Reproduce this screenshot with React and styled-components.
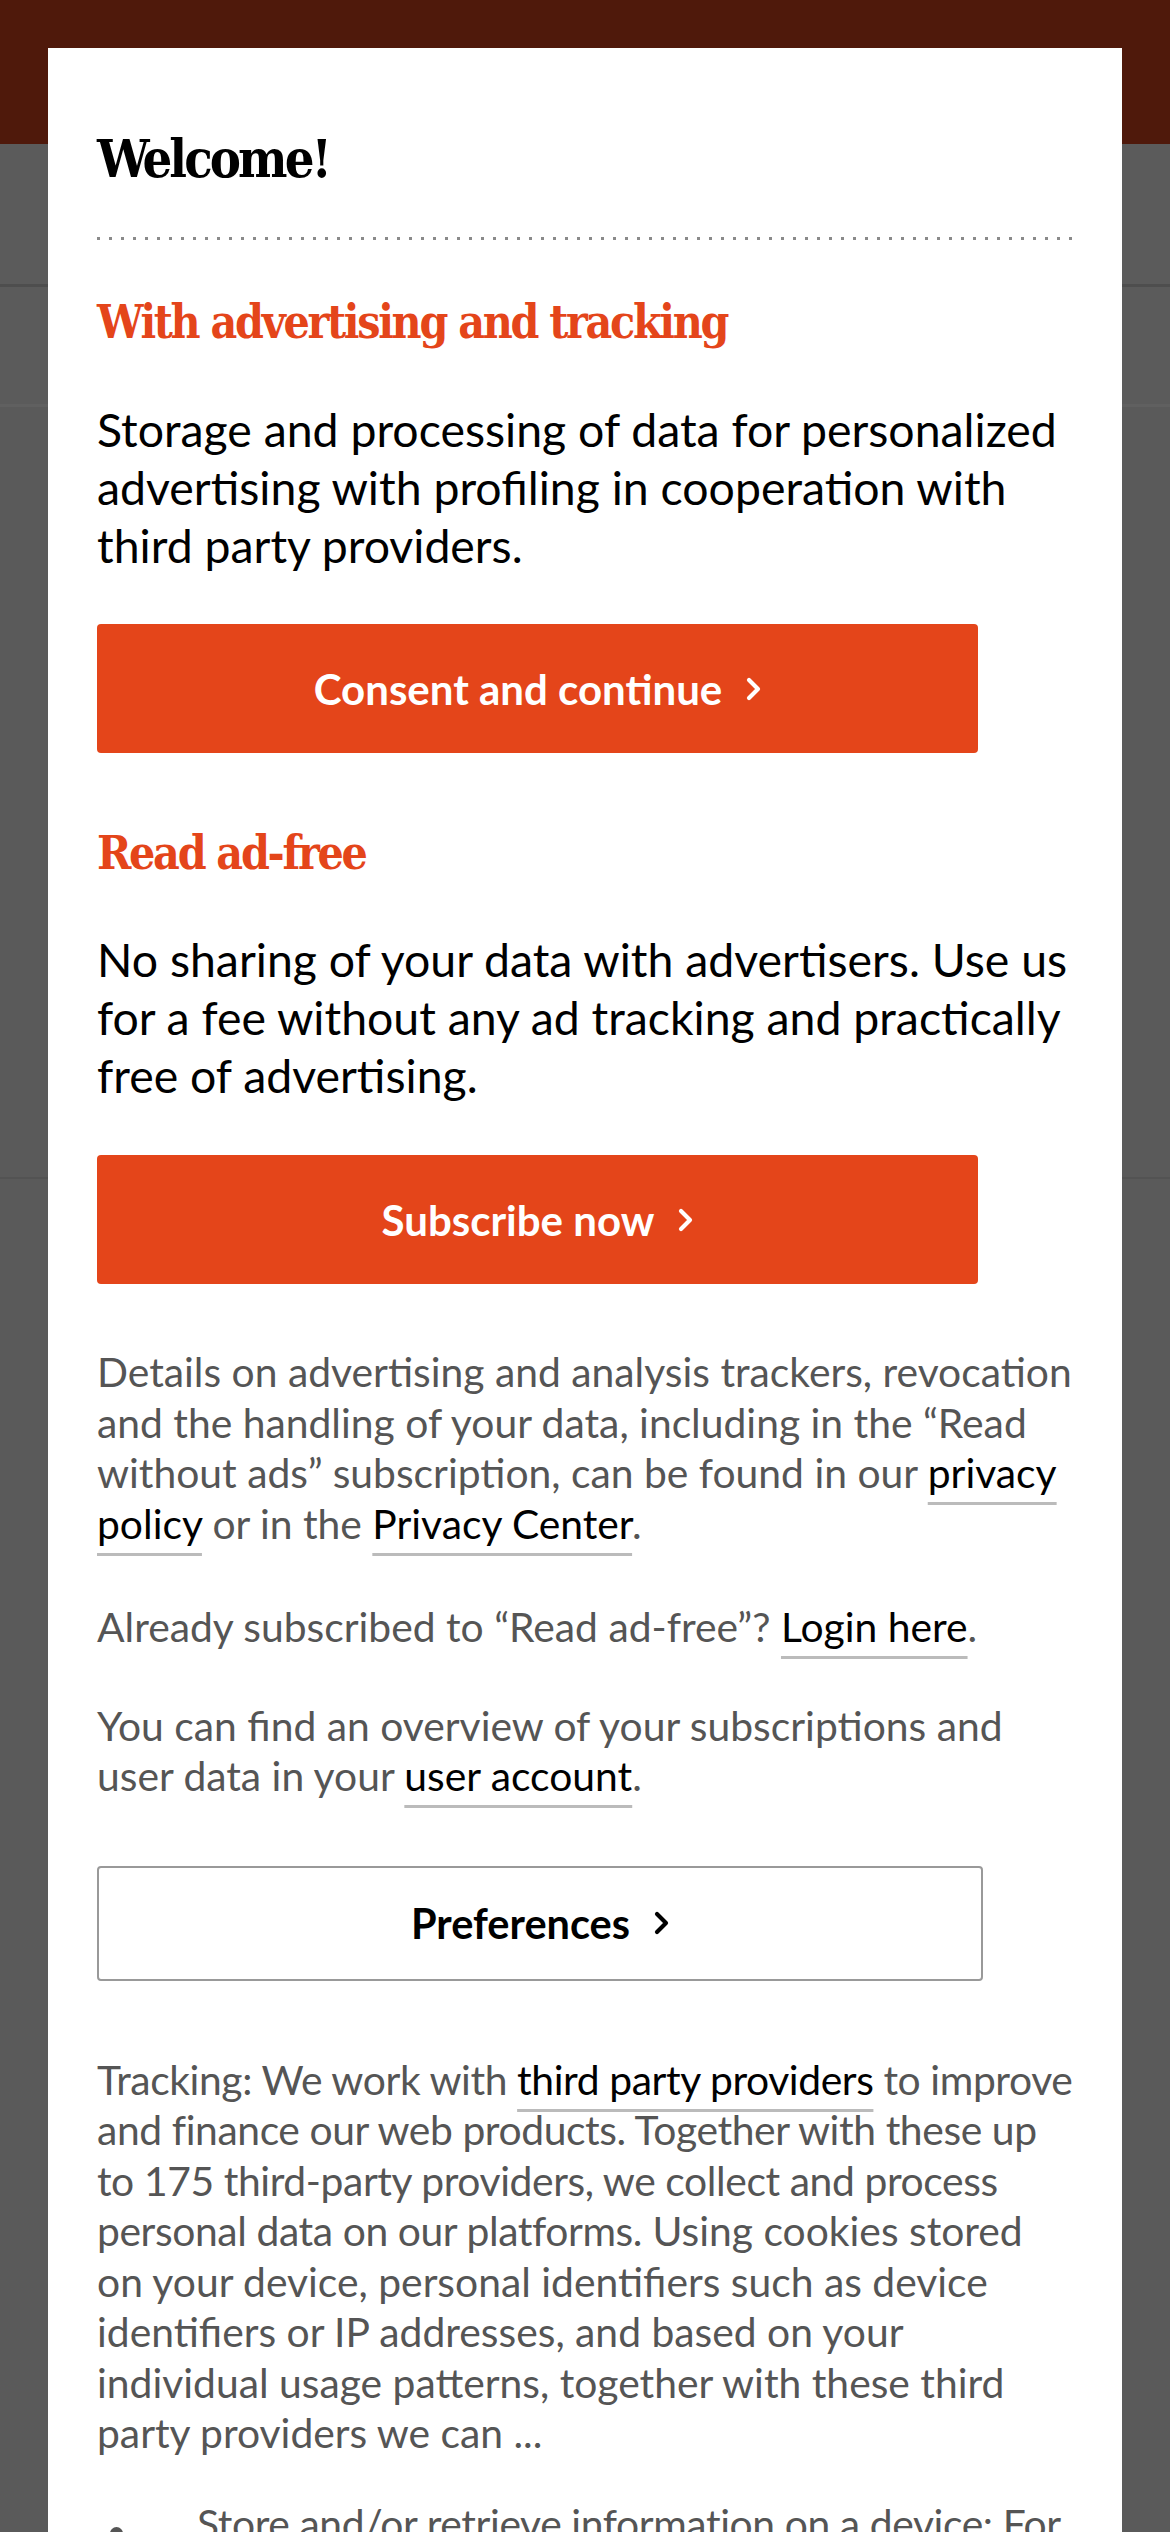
import React from 'react';
import styled, { createGlobalStyle } from 'styled-components';

const GlobalStyle = createGlobalStyle`
  html, body {
    margin: 0;
    padding: 0;
    background: #5a5a5a;
  }
  body {
    font-family: Lato, 'Noto Sans', sans-serif;
    -webkit-font-smoothing: antialiased;
  }
  * {
    box-sizing: border-box;
  }
`;

const orange = '#e4451a';

const Page = styled.div`
  position: relative;
  width: 1170px;
  height: 2532px;
  overflow: hidden;
  background: #5a5a5a;
`;

const Masthead = styled.div`
  height: 144px;
  background: #4f190b;
`;

const NavBar = styled.div`
  height: ${(props) => props.height}px;
  background: #5b5b5b;
  border-bottom: 3px solid ${(props) => props.line};
`;

const Content = styled.div`
  height: 772px;
  background: #5a5a5a;
  border-bottom: 2px solid #535353;
`;

const Modal = styled.div`
  position: absolute;
  top: 48px;
  left: 48px;
  width: 1074px;
  min-height: 2600px;
  background: #fff;
  padding: 85px 48px 0 49px;
`;

const Title = styled.h1`
  margin: 0;
  font-family: 'DejaVu Serif', 'Liberation Serif', serif;
  font-stretch: condensed;
  font-weight: 700;
  font-size: 52px;
  line-height: 52px;
  letter-spacing: -2.9px;
  color: #000;
`;

const Dotted = styled.div`
  height: 3px;
  margin-top: 52px;
  margin-right: 2px;
  background-image: linear-gradient(to right, #8a8a8a 3px, transparent 3px);
  background-size: 12px 3px;
  background-repeat: repeat-x;
`;

const SectionTitle = styled.h2`
  margin: ${(props) => props.top}px 0 0;
  font-family: 'DejaVu Serif', 'Liberation Serif', serif;
  font-stretch: condensed;
  font-weight: 700;
  font-size: 46px;
  line-height: 47px;
  letter-spacing: -2.3px;
  color: ${orange};
`;

const Lead = styled.p`
  margin: ${(props) => props.top}px 0 0;
  font-size: 46.4px;
  line-height: 58px;
  color: #000;
`;

const Chevron = () => (
  <svg width="15" height="24" viewBox="0 0 15 24" fill="none">
    <polyline
      points="3,3 12,12 3,21"
      stroke="currentColor"
      strokeWidth="4.2"
      strokeLinecap="round"
      strokeLinejoin="round"
    />
  </svg>
);

const PrimaryButton = styled.button`
  display: flex;
  align-items: center;
  justify-content: center;
  gap: 24px;
  width: 881px;
  height: 129px;
  margin-top: ${(props) => props.top}px;
  border: none;
  border-radius: 4px;
  background: ${orange};
  color: #fff;
  font-family: Lato, sans-serif;
  font-weight: 700;
  font-size: 42px;
  padding: 0;
  cursor: pointer;
`;

const OutlineButton = styled(PrimaryButton)`
  width: 886px;
  height: 115px;
  background: #fff;
  color: #000;
  font-size: 41.5px;
  border: 2px solid #999;
`;

const Small = styled.p`
  margin: ${(props) => props.top}px 0 0;
  font-size: 40.8px;
  line-height: 50.5px;
  color: #555;
`;

const Tight = styled.span`
  letter-spacing: -0.4px;
`;

const Link = styled.a`
  color: #000;
  text-decoration: underline;
  text-decoration-color: #bbb;
  text-decoration-thickness: 3px;
  text-underline-offset: 14px;
  cursor: pointer;
`;

const List = styled.ul`
  margin: 40px 0 0;
  padding: 0;
  list-style: none;
`;

const Item = styled.li`
  display: grid;
  grid-template-columns: 100px 1fr;
  font-size: 40.8px;
  line-height: 50.5px;
  letter-spacing: -0.4px;
  color: #555;
`;

const Dot = styled.span`
  width: 13px;
  height: 13px;
  margin: 28px 0 0 13px;
  border-radius: 50%;
  background: #555;
`;

export default function App() {
  return (
    <>
      <GlobalStyle />
      <Page>
        <Masthead />
        <NavBar height={143} line="#4e4e4e" />
        <NavBar height={120} line="#606060" />
        <Content />

        <Modal>
          <Title>Welcome!</Title>
          <Dotted />

          <SectionTitle top={59}>With advertising and tracking</SectionTitle>
          <Lead top={54}>
            Storage and processing of data for personalized advertising with
            profiling in cooperation with third party providers.
          </Lead>
          <PrimaryButton top={50}>
            Consent and continue <Chevron />
          </PrimaryButton>

          <SectionTitle top={77}>Read ad-free</SectionTitle>
          <Lead top={53}>
            No sharing of your data with advertisers. Use us for a fee without
            any ad tracking and practically free of advertising.
          </Lead>
          <PrimaryButton top={51}>
            Subscribe now <Chevron />
          </PrimaryButton>

          <Small top={63}>
            Details on advertising and analysis trackers, revocation and the
            handling of your data, including in the “Read without ads”
            subscription, can be found in our <Link>privacy policy</Link> or in
            the <Link>Privacy Center</Link>.
          </Small>
          <Small top={53}>
            Already subscribed to “Read ad-free”? <Link>Login here</Link>.
          </Small>
          <Small top={48}>
            You can find an overview of your subscriptions and user data in
            your <Link>user account</Link>.
          </Small>

          <OutlineButton top={64}>
            Preferences <Chevron />
          </OutlineButton>

          <Small top={74}>
            <Tight>
              Tracking: We work with <Link>third party providers</Link> to
              improve and finance our web products. Together with these up to
              175 third-party providers, we collect and process personal data on
              our platforms.
            </Tight>{' '}
            Using cookies stored on your device, personal identifiers such as
            device identifiers or IP addresses, and based on your individual
            usage patterns, together with these third party providers we can ...
          </Small>
          <List>
            <Item>
              <Dot />
              <span>
                Store and/or retrieve information on a device: For example,
                cookies or device identifiers can be stored or accessed.
              </span>
            </Item>
          </List>
        </Modal>
      </Page>
    </>
  );
}
